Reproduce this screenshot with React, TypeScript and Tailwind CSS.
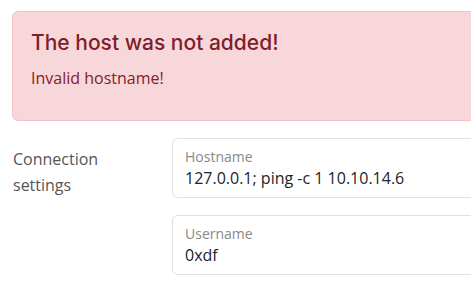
const fields = [
  { label: "Hostname", value: "127.0.0.1; ping -c 1 10.10.14.6" },
  { label: "Username", value: "0xdf" },
];

export default function App() {
  return (
    <div className="w-[471px] h-[299px] overflow-hidden bg-white font-['Open_Sans',sans-serif]">
      <div className="w-[640px] pl-[12px] pt-[11px]">
        <div className="rounded-l-[6px] border border-[#f5c2c7] bg-[#f8d7da] px-[18px] pt-[17px] pb-[30px] text-[#842029]">
          <h4 className="font-['Inter',sans-serif] text-[21px] font-medium leading-[28px] text-[#7f1d2b]">
            The host was not added!
          </h4>
          <p className="mt-[9px] text-[16px] leading-[24px]">Invalid hostname!</p>
        </div>

        <div className="mt-[17px] flex">
          <div className="w-[160px] shrink-0 pt-[8px] pl-[1px] text-[16px] leading-[26px] text-[#555]">
            Connection
            <br />
            settings
          </div>
          <div className="flex flex-1 flex-col gap-[17px]">
            {fields.map((field) => (
              <div
                key={field.label}
                className="h-[60px] rounded-l-[6px] border border-[#dee2e6] px-[12px] pt-[9px]"
              >
                <div className="text-[14px] leading-[18px] text-[#888]">{field.label}</div>
                <div className="text-[16px] leading-[24px] text-[#212529]">{field.value}</div>
              </div>
            ))}
          </div>
        </div>
      </div>
    </div>
  );
}
